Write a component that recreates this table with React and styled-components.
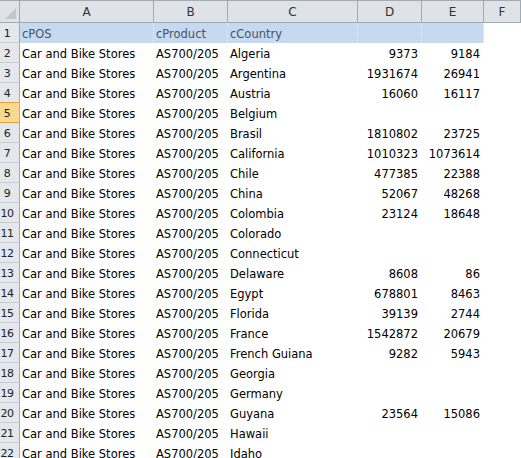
import styled, { createGlobalStyle } from "styled-components";

const GlobalStyle = createGlobalStyle`
  html, body {
    margin: 0;
    padding: 0;
    background: #ffffff;
    overflow: hidden;
  }
`;

const Sheet = styled.div`
  width: 521px;
  height: 458px;
  overflow: hidden;
  font-family: "DejaVu Sans", "Liberation Sans", sans-serif;
  font-size: 11.5px;
  color: #000;
  border-top: 1px solid #a5abb3;
  box-sizing: border-box;
`;

const Grid = styled.div`
  display: grid;
  grid-template-columns: 20px 134px 74px 130px 64px 62px 1fr;
  grid-auto-rows: 20px;
  grid-template-rows: 22px;
`;

const Corner = styled.div`
  background: #dfe3e8;
  border-right: 1px solid #9eaab6;
  border-bottom: 1px solid #9eaab6;
  position: relative;
  &::after {
    content: "";
    position: absolute;
    right: 3px;
    bottom: 3px;
    width: 0;
    height: 0;
    border-left: 11px solid transparent;
    border-bottom: 11px solid #c3c7cc;
  }
`;

const ColHead = styled.div`
  background: #dfe3e8;
  border-right: 1px solid #9eaab6;
  border-bottom: 1px solid #9eaab6;
  display: flex;
  align-items: center;
  justify-content: center;
  color: #333;
  font-size: 12px;
  padding-top: 1px;
  box-sizing: border-box;
`;

const RowHead = styled.div`
  background: ${p => (p.$selected ? "#f8d98f" : "#e4e7eb")};
  border-right: 1px solid ${p => (p.$selected ? "#e8a43c" : "#9eaab6")};
  border-bottom: 1px solid ${p => (p.$selected ? "#e8a43c" : "#c8ccd1")};
  border-top: ${p => (p.$selected ? "1px solid #e8a43c" : "none")};
  margin-top: ${p => (p.$selected ? "-1px" : "0")};
  display: flex;
  align-items: center;
  justify-content: center;
  padding: 1px 5px 0 0;
  color: #222;
  font-size: 11px;
  letter-spacing: -0.5px;
  box-sizing: border-box;
`;

const Cell = styled.div`
  display: flex;
  align-items: center;
  justify-content: ${p => (p.$num ? "flex-end" : "flex-start")};
  padding: 1px ${p => (p.$num ? "4px" : "2px")} 0;
  white-space: nowrap;
  overflow: hidden;
  box-sizing: border-box;
  background: ${p => (p.$head ? "#c5d9f1" : "transparent")};
  color: ${p => (p.$head ? "#4a5363" : "#000")};
  border-right: ${p => (p.$head ? "1px dotted #eef3fa" : "none")};
`;

const rows = [
  ["Algeria", 9373, 9184],
  ["Argentina", 1931674, 26941],
  ["Austria", 16060, 16117],
  ["Belgium", "", ""],
  ["Brasil", 1810802, 23725],
  ["California", 1010323, 1073614],
  ["Chile", 477385, 22388],
  ["China", 52067, 48268],
  ["Colombia", 23124, 18648],
  ["Colorado", "", ""],
  ["Connecticut", "", ""],
  ["Delaware", 8608, 86],
  ["Egypt", 678801, 8463],
  ["Florida", 39139, 2744],
  ["France", 1542872, 20679],
  ["French Guiana", 9282, 5943],
  ["Georgia", "", ""],
  ["Germany", "", ""],
  ["Guyana", 23564, 15086],
  ["Hawaii", "", ""],
  ["Idaho", "", ""],
];

export default function App() {
  return (
    <Sheet>
      <GlobalStyle />
      <Grid>
        <Corner />
        {["A", "B", "C", "D", "E", "F"].map(c => (
          <ColHead key={c}>{c}</ColHead>
        ))}

        <RowHead>1</RowHead>
        <Cell $head>cPOS</Cell>
        <Cell $head>cProduct</Cell>
        <Cell $head>cCountry</Cell>
        <Cell $head />
        <Cell $head />
        <Cell />

        {rows.map(([country, d, e], i) => {
          const n = i + 2;
          return [
            <RowHead key={`h${n}`} $selected={n === 5}>{n}</RowHead>,
            <Cell key={`a${n}`}>Car and Bike Stores</Cell>,
            <Cell key={`b${n}`}>AS700/205</Cell>,
            <Cell key={`c${n}`}>{country}</Cell>,
            <Cell key={`d${n}`} $num>{d}</Cell>,
            <Cell key={`e${n}`} $num>{e}</Cell>,
            <Cell key={`f${n}`} />,
          ];
        })}
      </Grid>
    </Sheet>
  );
}
